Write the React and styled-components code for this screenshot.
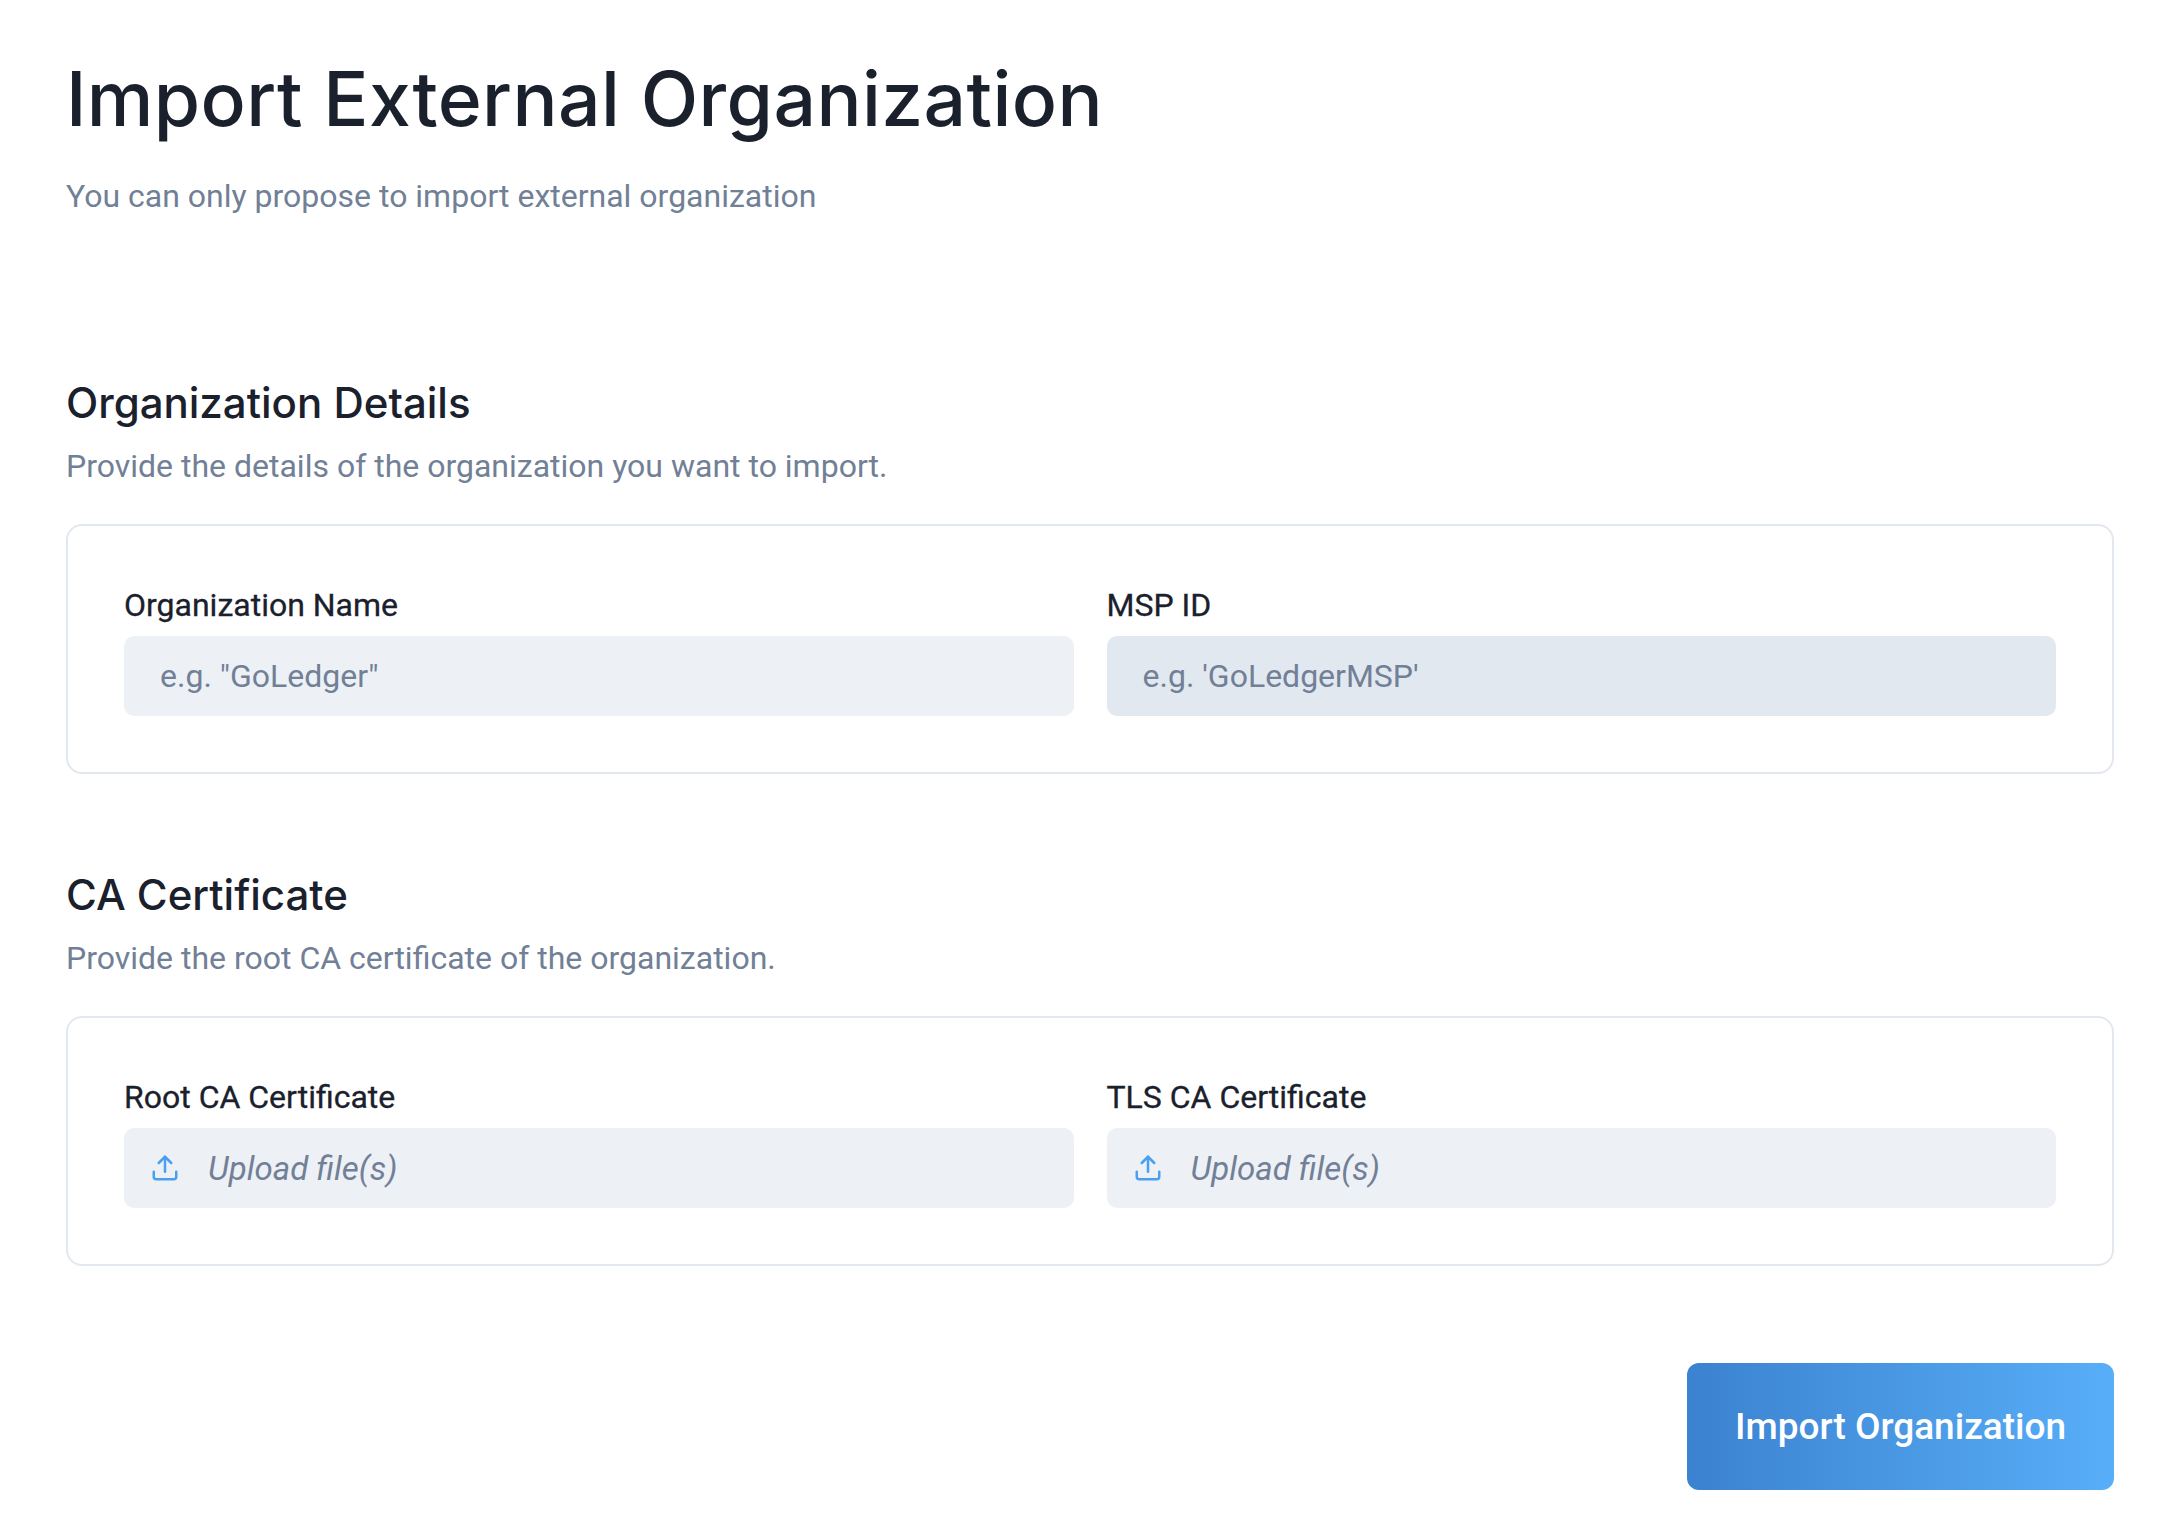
import React from "react";
import styled, { createGlobalStyle } from "styled-components";
import { Upload } from "lucide-react";

const Global = createGlobalStyle`
  body { margin: 0; background: #fff; font-family: Roboto, "Liberation Sans", sans-serif; }
`;

const Page = styled.div`
  padding: 54px 46px 0 66px;
  display: flex;
  flex-direction: column;
`;
const Title = styled.h1`
  margin: 0;
  font-family: Inter, "Liberation Sans", sans-serif;
  font-weight: 500;
  font-size: 75px;
  line-height: 1.2;
  letter-spacing: 0.4px;
  color: #1a202c;
`;
const Sub = styled.p`
  margin: ${p => p.$top}px 0 0;
  font-size: 32px;
  line-height: 1.3;
  color: #718096;
`;
const SectionTitle = styled.h2`
  margin: ${p => p.$top}px 0 0;
  font-family: Inter, "Liberation Sans", sans-serif;
  font-weight: 500;
  font-size: 42px;
  line-height: 1.2;
  color: #1a202c;
`;
const Card = styled.div`
  margin-top: 36px;
  border: 2px solid #e2e8f0;
  border-radius: 16px;
  padding: 60px 56px 56px 56px;
  display: grid;
  grid-template-columns: 1fr 1fr;
  column-gap: 33px;
`;
const Field = styled.div`
  display: flex;
  flex-direction: column;
  gap: 12px;
`;
const Label = styled.label`
  font-size: 32px;
  font-weight: 400;
  color: #1a202c;
  line-height: 1.2;
  -webkit-text-stroke: 0.3px #1a202c;
`;
const Input = styled.div`
  height: 80px;
  border-radius: 10px;
  background: ${p => (p.$dark ? "#e2e8f0" : "#edf1f6")};
  display: flex;
  align-items: center;
  padding: 0 36px;
  font-size: 32px;
  color: #718096;
  gap: 28px;
`;
const UploadBox = styled(Input)`
  padding: 0 26px;
  font-style: italic;
  font-size: 33px;
`;
const Actions = styled.div`
  display: flex;
  justify-content: flex-end;
  margin-top: 97px;
`;
const Button = styled.button`
  width: 427px;
  height: 127px;
  border: none;
  border-radius: 12px;
  background: linear-gradient(90deg, #3b82d0 0%, #58aef8 100%);
  color: #fff;
  font-family: Roboto, "Liberation Sans", sans-serif;
  font-weight: 500;
  font-size: 37px;
`;

export default function App() {
  return (
    <>
      <Global />
      <Page>
        <Title>Import External Organization</Title>
        <Sub $top={32}>You can only propose to import external organization</Sub>
        <SectionTitle $top={160}>Organization Details</SectionTitle>
        <Sub $top={18}>Provide the details of the organization you want to import.</Sub>
        <Card>
          <Field>
            <Label>Organization Name</Label>
            <Input>e.g. "GoLedger"</Input>
          </Field>
          <Field>
            <Label>MSP ID</Label>
            <Input $dark>e.g. 'GoLedgerMSP'</Input>
          </Field>
        </Card>
        <SectionTitle $top={96}>CA Certificate</SectionTitle>
        <Sub $top={18}>Provide the root CA certificate of the organization.</Sub>
        <Card>
          <Field>
            <Label>Root CA Certificate</Label>
            <UploadBox><Upload size={30} color="#4a9ff0" strokeWidth={2} />Upload file(s)</UploadBox>
          </Field>
          <Field>
            <Label>TLS CA Certificate</Label>
            <UploadBox><Upload size={30} color="#4a9ff0" strokeWidth={2} />Upload file(s)</UploadBox>
          </Field>
        </Card>
        <Actions>
          <Button>Import Organization</Button>
        </Actions>
      </Page>
    </>
  );
}
